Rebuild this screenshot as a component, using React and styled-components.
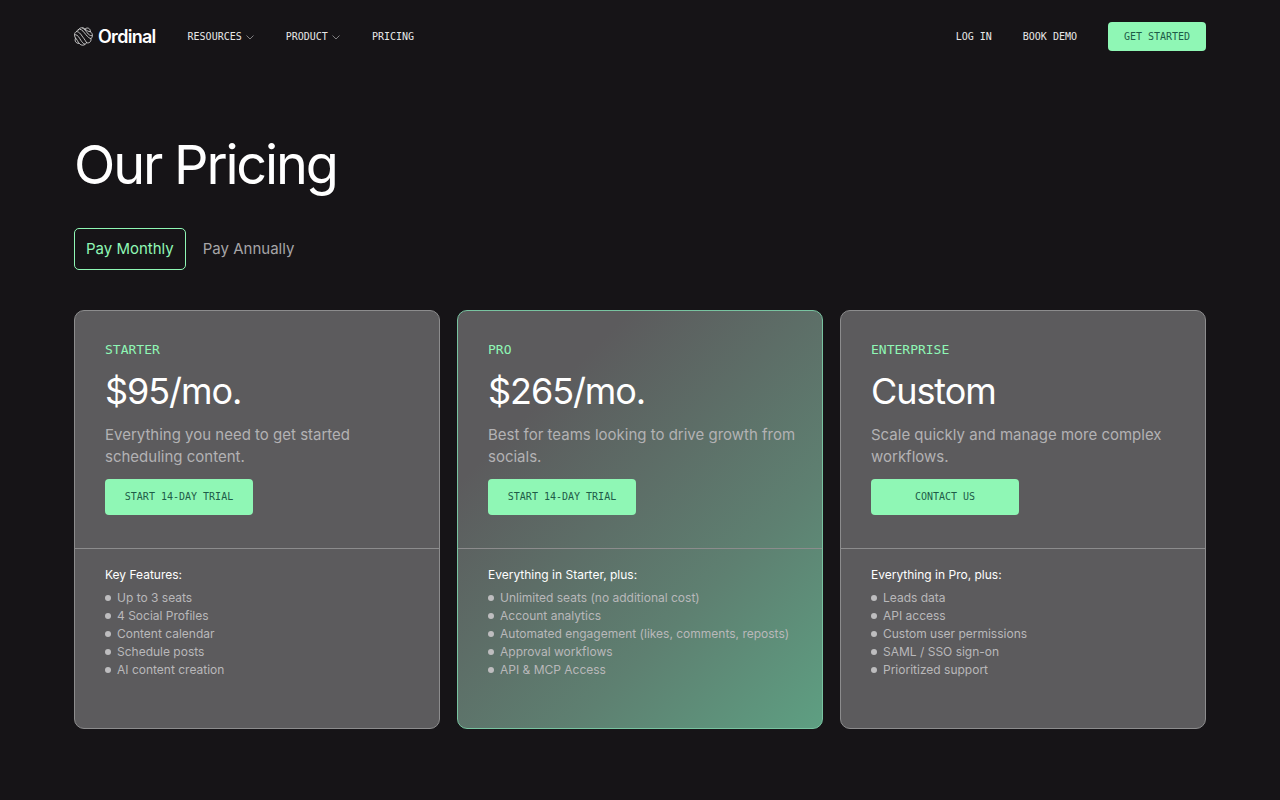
import { useState } from 'react';
import styled, { createGlobalStyle } from 'styled-components';

const GlobalStyle = createGlobalStyle`
	* {
		box-sizing: border-box;
	}

	body {
		margin: 0;
		background: #161417;
		color: #fff;
		font-family: Inter, sans-serif;
	}
`;

const mono = "'DejaVu Sans Mono', monospace";

const Header = styled.header`
	display: flex;
	align-items: center;
	justify-content: space-between;
	height: 73px;
	padding: 0 74px;
`;

const Nav = styled.nav`
	display: flex;
	align-items: center;
	gap: ${(props) => props.$gap}px;
`;

const Logo = styled.a`
	display: flex;
	align-items: center;
	gap: 5px;
	color: #fff;
	font-size: 18px;
	font-weight: 600;
	line-height: 24px;
	letter-spacing: -0.04em;
	text-decoration: none;
`;

const NavLink = styled.a`
	color: #e8e8e8;
	font-family: ${mono};
	font-size: 10px;
	line-height: 16px;
	text-decoration: none;
	text-transform: uppercase;
`;

const NavButton = styled.button`
	display: flex;
	align-items: center;
	gap: 4px;
	padding: 0;
	border: 0;
	background: none;
	color: #e8e8e8;
	font-family: ${mono};
	font-size: 10px;
	line-height: 16px;
	text-transform: uppercase;
`;

const Button = styled.button`
	width: ${(props) => (props.$small ? 98 : 148)}px;
	height: ${(props) => (props.$small ? 29 : 36)}px;
	padding: 0;
	border: 0;
	border-radius: 4px;
	background: #8ff7b5;
	color: #1e5c48;
	font-family: ${mono};
	font-size: 10px;
	line-height: 16px;
	text-transform: uppercase;
	cursor: pointer;
`;

const Main = styled.main`
	padding: 60px 74px 71px;
`;

const Title = styled.h1`
	margin: 0;
	font-size: 54px;
	font-weight: 400;
	line-height: 64px;
	letter-spacing: -0.04em;
`;

const Tabs = styled.div`
	display: flex;
	gap: 5px;
	margin: 31px 0 40px;
`;

const Tab = styled.button`
	height: 42px;
	padding: 0 11px;
	border: 1px solid ${(props) => (props.$active ? '#8ff7b5' : 'transparent')};
	border-radius: 5px;
	background: none;
	color: ${(props) => (props.$active ? '#8ff7b5' : '#a6a5a7')};
	font-family: inherit;
	font-size: 15px;
	line-height: 22px;
	cursor: pointer;
`;

const Plans = styled.div`
	display: grid;
	grid-template-columns: repeat(3, 1fr);
	gap: 17px;
`;

const Card = styled.section`
	border: 1px solid ${(props) => (props.$featured ? '#78c3a0' : '#8c8c8d')};
	border-radius: 10px;
	background: ${(props) =>
		props.$featured
			? 'linear-gradient(135deg, #5c5b5d 22%, #5e8071 68%, #5e9f82 100%)'
			: '#5c5b5d'};
`;

const Summary = styled.div`
	padding: 30px 20px 33px 30px;
	border-bottom: 1px solid #8c8c8d;
`;

const PlanName = styled.h2`
	margin: 0;
	color: #8ff7b5;
	font-family: ${mono};
	font-size: 13px;
	font-weight: 400;
	line-height: 18px;
	text-transform: uppercase;
`;

const Price = styled.p`
	margin: 10px 0 11px;
	font-size: 36px;
	line-height: 44px;
	letter-spacing: -0.03em;
`;

const Description = styled.p`
	margin: 0 0 11px;
	color: #b3b2b4;
	font-size: 15px;
	line-height: 22px;
`;

const Details = styled.div`
	padding: 17px 30px 49px;
`;

const DetailsTitle = styled.h3`
	margin: 0 0 6px;
	font-size: 12px;
	font-weight: 400;
	line-height: 17px;
`;

const Features = styled.ul`
	margin: 0;
	padding: 0;
	list-style: none;
`;

const Feature = styled.li`
	display: flex;
	align-items: center;
	gap: 6px;
	color: #b9b8ba;
	font-size: 12px;
	line-height: 18px;

	&::before {
		content: '';
		width: 6px;
		height: 6px;
		border-radius: 50%;
		background: #bebdbf;
	}
`;

const plans = [
	{
		name: 'Starter',
		price: '$95/mo.',
		description: 'Everything you need to get started scheduling content.',
		action: 'Start 14-day trial',
		title: 'Key Features:',
		features: [
			'Up to 3 seats',
			'4 Social Profiles',
			'Content calendar',
			'Schedule posts',
			'AI content creation',
		],
	},
	{
		name: 'Pro',
		featured: true,
		price: '$265/mo.',
		description: 'Best for teams looking to drive growth from socials.',
		action: 'Start 14-day trial',
		title: 'Everything in Starter, plus:',
		features: [
			'Unlimited seats (no additional cost)',
			'Account analytics',
			'Automated engagement (likes, comments, reposts)',
			'Approval workflows',
			'API & MCP Access',
		],
	},
	{
		name: 'Enterprise',
		price: 'Custom',
		description: 'Scale quickly and manage more complex workflows.',
		action: 'Contact us',
		title: 'Everything in Pro, plus:',
		features: [
			'Leads data',
			'API access',
			'Custom user permissions',
			'SAML / SSO sign-on',
			'Prioritized support',
		],
	},
];

const LogoMark = () => (
	<svg width="19" height="19" viewBox="0 0 20 20" fill="none" stroke="#dcdcdc" strokeWidth="0.9" strokeLinecap="round" aria-hidden="true">
		<path d="M4.500 3C6.500 0 10 .2 11.500 2.200 14-.2 17.500 1.500 17.200 5c2.800 1.700 2.800 5.500.6 7.200.7 3.500-2.300 5.300-4.600 4.300-1.500 3.300-6 3.400-7.700.7C2 17.500.2 14.500 1.700 11.600-.3 9 .3 5.800 2.700 4.800 2.800 4 3.500 3.300 4.500 3z" />
		<path d="M2.700 4.800c3.800.2 5 4.200 7.500 7 1.500 1.700 2.300 3.800 3 4.700M6 2.200c3 .6 4.300 3.300 6.500 5.800 2 2.300 3.500 4 5.300 4.200M9 1.200c2 .8 3.500 3 5 5 1.300 1.800 2.700 3 4.800 3M11.500 2.200c1.500.8 3.300 3 5.700 2.800M1.200 8c3.300.3 4.300 3.500 6 6 1.200 1.800 2.500 3.600 4 4M1.700 11.600c1.300.8 2.300 4.500 3.800 5.600" />
	</svg>
);

const Chevron = () => (
	<svg width="8" height="6" viewBox="0 0 8 6" fill="none" stroke="#8b8a8c" strokeWidth="0.9" aria-hidden="true">
		<path d="M.5 1.500 4 5l3.500-3.500" />
	</svg>
);

const Plan = ({ plan }) => (
	<Card $featured={plan.featured}>
		<Summary>
			<PlanName>{plan.name}</PlanName>
			<Price>{plan.price}</Price>
			<Description>{plan.description}</Description>
			<Button>{plan.action}</Button>
		</Summary>
		<Details>
			<DetailsTitle>{plan.title}</DetailsTitle>
			<Features>
				{plan.features.map((feature) => (
					<Feature key={feature}>{feature}</Feature>
				))}
			</Features>
		</Details>
	</Card>
);

const App = () => {
	const [period, setPeriod] = useState('Monthly');

	return (
		<>
			<GlobalStyle />
			<Header>
				<Nav $gap={32}>
					<Logo href="#">
						<LogoMark />
						Ordinal
					</Logo>
					<NavButton>
						Resources <Chevron />
					</NavButton>
					<NavButton>
						Product <Chevron />
					</NavButton>
					<NavLink href="#pricing">Pricing</NavLink>
				</Nav>
				<Nav $gap={31}>
					<NavLink href="#login">Log in</NavLink>
					<NavLink href="#demo">Book demo</NavLink>
					<Button $small>Get started</Button>
				</Nav>
			</Header>
			<Main>
				<Title>Our Pricing</Title>
				<Tabs>
					{['Monthly', 'Annually'].map((name) => (
						<Tab
							key={name}
							$active={period === name}
							aria-pressed={period === name}
							onClick={() => setPeriod(name)}
						>
							Pay {name}
						</Tab>
					))}
				</Tabs>
				<Plans>
					{plans.map((plan) => (
						<Plan key={plan.name} plan={plan} />
					))}
				</Plans>
			</Main>
		</>
	);
};

export default App;
